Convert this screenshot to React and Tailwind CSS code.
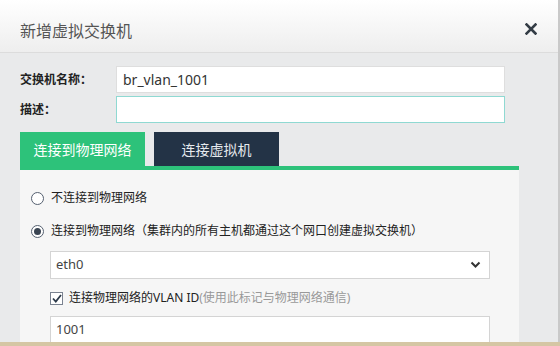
import React from "react";

const font = { fontFamily: '"Noto Sans", "Noto Sans CJK SC", sans-serif' };

export default function App() {
  return (
    <div
      className="w-[560px] h-[346px] overflow-hidden bg-[#d5c6a4] flex flex-col"
      style={font}
    >
      <div className="w-[560px] h-[342px] shrink-0 overflow-hidden flex">
        <div className="w-[558px] h-full bg-[#e9eaeb] flex flex-col">
          {/* header */}
          <div className="h-[53px] shrink-0 bg-gradient-to-b from-white to-[#eeeeee] border-b border-[#dcdcdc] flex items-center justify-between pl-[20px] pr-[20px] pt-[9px]">
            <div className="text-[16px] text-[#555] leading-none">
              新增虚拟交换机
            </div>
            <svg width="12" height="12" viewBox="0 0 12 12" className="mr-[1px] mt-[-4px]">
              <path d="M1.5 1.5 L10.5 10.5 M10.5 1.5 L1.5 10.5" stroke="#333c45" strokeWidth="2.6" strokeLinecap="square" />
            </svg>
          </div>
          {/* form */}
          <div className="px-[20px] pt-[13px] flex flex-col gap-[3px]">
            <div className="flex items-center h-[27px]">
              <div className="w-[96px] text-[12px] font-bold text-[#222]">交换机名称：</div>
              <div className="w-[389px] h-[27px] bg-white border border-[#dedede] flex items-center pl-[6px] text-[14px] text-[#333]">
                br_vlan_1001
              </div>
            </div>
            <div className="flex items-center h-[27px]">
              <div className="w-[96px] text-[12px] font-bold text-[#222]">描述：</div>
              <div className="w-[389px] h-[27px] bg-white border border-[#8fd9d2]" />
            </div>
          </div>
          {/* tabs */}
          <div className="px-[20px] mt-[9px] w-[539px] flex flex-col">
            <div className="flex gap-[9px] items-end h-[34px]">
              <div className="w-[125px] h-[34px] bg-[#2dc27a] text-white text-[14px] flex items-center justify-center">
                连接到物理网络
              </div>
              <div className="w-[125px] h-[34px] bg-[#233346] text-[#e6eaee] text-[14px] flex items-center justify-center">
                连接虚拟机
              </div>
            </div>
            <div className="h-[4px] bg-[#2dc27a]" />
            <div className="bg-[#f6f6f6] h-[200px] pl-[11px] pt-[21px] flex flex-col">
              <div className="flex items-center gap-[7px] h-[14px]">
                <span className="w-[13px] h-[13px] rounded-full border border-[#556070] bg-white" />
                <span className="text-[12px] text-[#222]">不连接到物理网络</span>
              </div>
              <div className="flex items-center gap-[7px] h-[14px] mt-[19px]">
                <span className="w-[13px] h-[13px] rounded-full border border-[#556070] bg-white flex items-center justify-center">
                  <span className="w-[7px] h-[7px] rounded-full bg-[#3a4452]" />
                </span>
                <span className="text-[12px] text-[#222]">
                  连接到物理网络（集群内的所有主机都通过这个网口创建虚拟交换机）
                </span>
              </div>
              <div className="ml-[19px] mt-[13px] w-[440px] h-[28px] bg-white border border-[#d4d4d4] flex items-center justify-between pl-[5px] pr-[8px] text-[13px] text-[#444]">
                <span>eth0</span>
                <svg width="11" height="8" viewBox="0 0 11 8">
                  <path d="M1.5 1.5 L5.5 5.5 L9.5 1.5" stroke="#333" strokeWidth="2" fill="none" />
                </svg>
              </div>
              <div className="ml-[19px] mt-[12px] flex items-center gap-[6px] h-[14px]">
                <span className="w-[13px] h-[13px] border border-[#7a8290] bg-white flex items-center justify-center">
                  <svg width="10" height="9" viewBox="0 0 10 9">
                    <path d="M1 4.5 L3.8 7.5 L9 1" stroke="#2d3a4a" strokeWidth="1.8" fill="none" />
                  </svg>
                </span>
                <span className="text-[12px] text-[#222]">
                  连接物理网络的VLAN ID<span className="text-[#999]">(使用此标记与物理网络通信)</span>
                </span>
              </div>
              <div className="ml-[19px] mt-[11px] w-[440px] h-[28px] bg-white border border-[#d4d4d4] flex items-center pl-[5px] text-[13px] text-[#444]">
                1001
              </div>
            </div>
          </div>
        </div>
        <div className="w-[2px] h-full bg-[#c9c9c9]" />
      </div>
    </div>
  );
}
